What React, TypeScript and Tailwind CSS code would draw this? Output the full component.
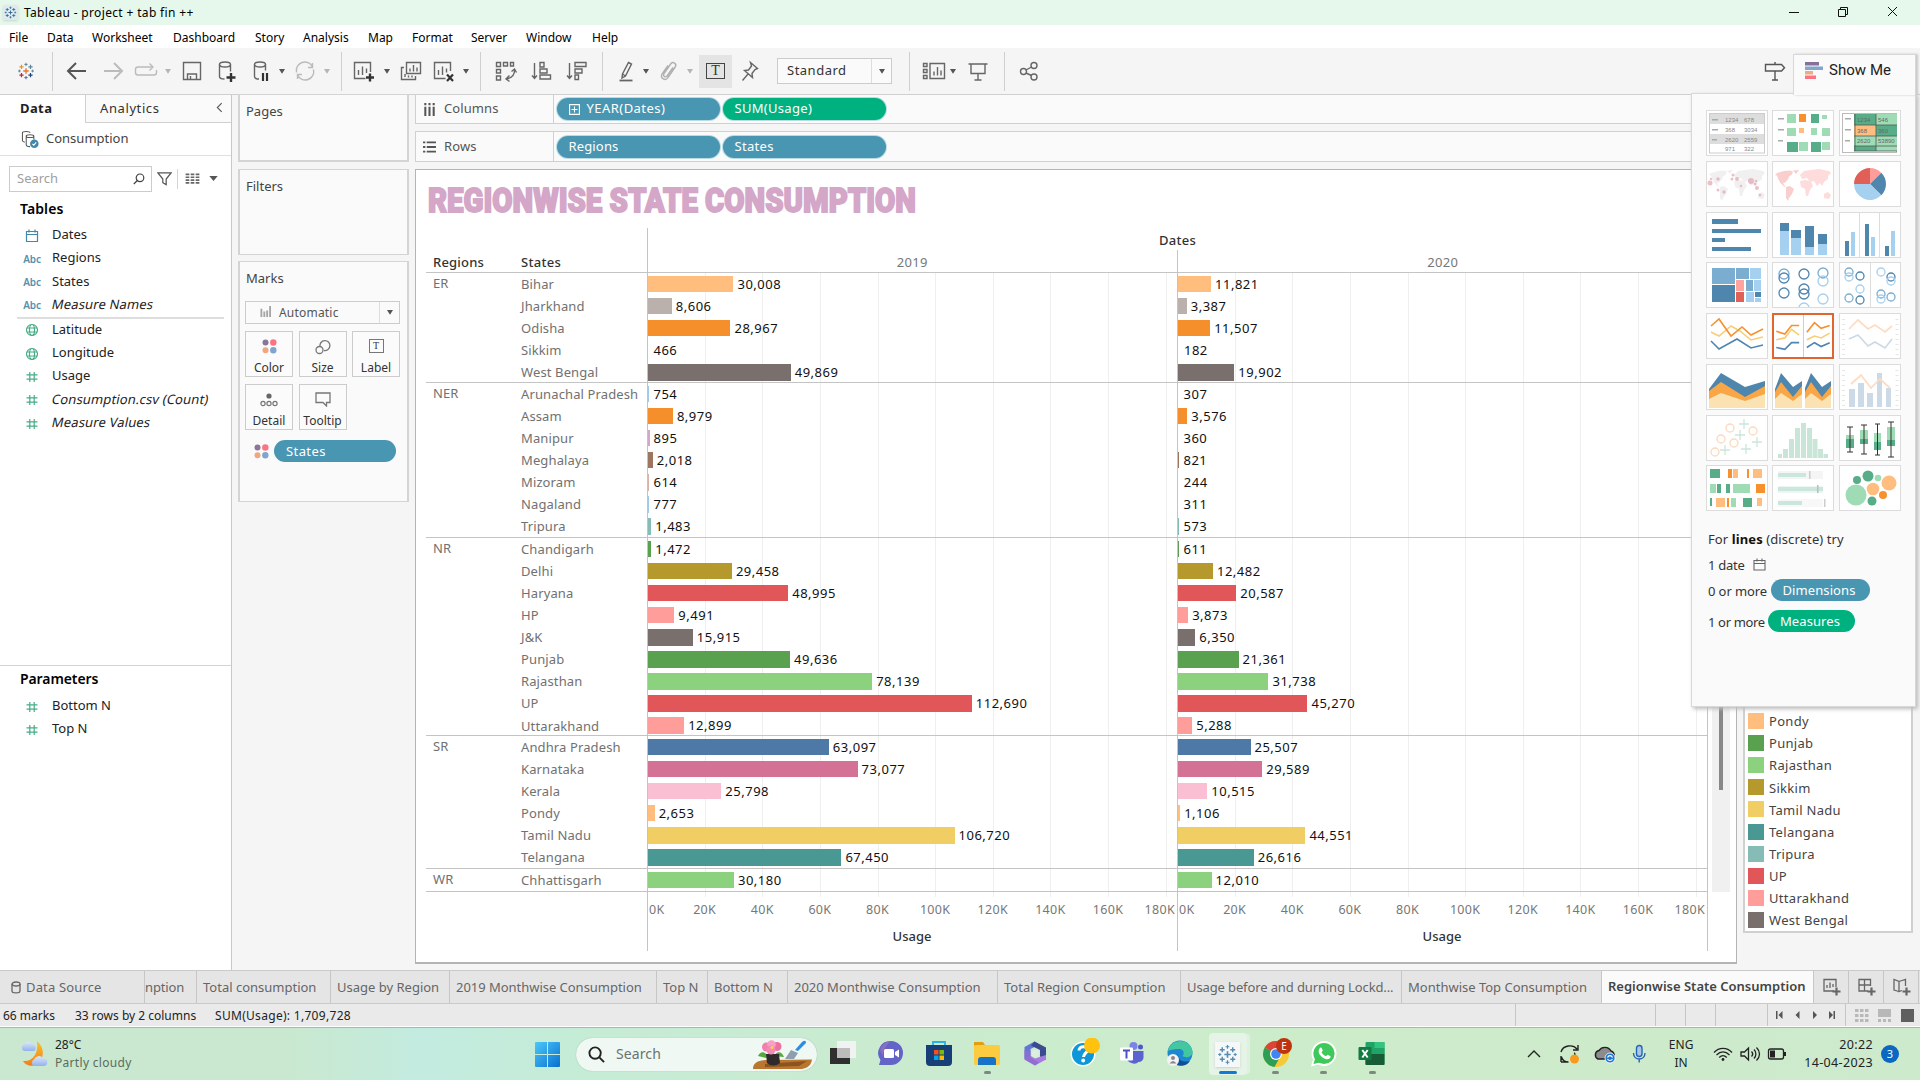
import React from "react";

type Row = [name: string, color: string, y2019: number, y2020: number];

const groups: { region: string; rows: Row[]; h: string }[] = [
  {
    region: "ER",
    h: "h-[110px]",
    rows: [
      ["Bihar", "#ffbe7d", 30008, 11821],
      ["Jharkhand", "#bab0ac", 8606, 3387],
      ["Odisha", "#f58f2c", 28967, 11507],
      ["Sikkim", "#b6992d", 466, 182],
      ["West Bengal", "#79706e", 49869, 19902],
    ],
  },
  {
    region: "NER",
    h: "h-[155px]",
    rows: [
      ["Arunachal Pradesh", "#a0cbe8", 754, 307],
      ["Assam", "#f58f2c", 8979, 3576],
      ["Manipur", "#d4a6c8", 895, 360],
      ["Meghalaya", "#9d7660", 2018, 821],
      ["Mizoram", "#d7b5a6", 614, 244],
      ["Nagaland", "#a0cbe8", 777, 311],
      ["Tripura", "#86bcb6", 1483, 573],
    ],
  },
  {
    region: "NR",
    h: "h-[198px]",
    rows: [
      ["Chandigarh", "#59a14f", 1472, 611],
      ["Delhi", "#b6992d", 29458, 12482],
      ["Haryana", "#e15759", 48995, 20587],
      ["HP", "#ff9d9a", 9491, 3873],
      ["J&K", "#79706e", 15915, 6350],
      ["Punjab", "#59a14f", 49636, 21361],
      ["Rajasthan", "#8cd17d", 78139, 31738],
      ["UP", "#e15759", 112690, 45270],
      ["Uttarakhand", "#ff9d9a", 12899, 5288],
    ],
  },
  {
    region: "SR",
    h: "h-[133px]",
    rows: [
      ["Andhra Pradesh", "#4e79a7", 63097, 25507],
      ["Karnataka", "#d37295", 73077, 29589],
      ["Kerala", "#fabfd2", 25798, 10515],
      ["Pondy", "#ffbe7d", 2653, 1106],
      ["Tamil Nadu", "#f1ce63", 106720, 44551],
      ["Telangana", "#499894", 67450, 26616],
    ],
  },
  {
    region: "WR",
    h: "h-[23px]",
    rows: [["Chhattisgarh", "#8cd17d", 30180, 12010]],
  },
];

const PX_PER_UNIT = 0.002882;
const fmt = (n: number) => n.toLocaleString("en-US");

function Caret({ className = "", light = false }: { className?: string; light?: boolean }) {
  return (
    <svg viewBox="0 0 8 5" className={`h-[5px] w-[8px] shrink-0 ${className}`}>
      <path d="M1 0h6L4 4.8z" fill={light ? "#b5b5b5" : "#555"} />
    </svg>
  );
}

function Ico({ className = "", color = "#666", children }: { className?: string; color?: string; children: React.ReactNode }) {
  return (
    <svg viewBox="0 0 24 24" className={`h-6 w-6 shrink-0 ${className}`} fill="none" stroke={color} strokeWidth="1.4">
      {children}
    </svg>
  );
}

function Divider({ className = "" }: { className?: string }) {
  return <div className={`h-[39px] w-px shrink-0 bg-[#cfcfcf] ${className}`} />;
}

function TableauMark({ className = "", mono = false }: { className?: string; mono?: boolean }) {
  const c = mono
    ? ["#2f6f9e", "#2f6f9e", "#2f6f9e", "#2f6f9e", "#2f6f9e", "#2f6f9e", "#2f6f9e"]
    : ["#e8762d", "#5b879b", "#c72037", "#5c6692", "#eb912c", "#59879b", "#1f447e"];
  const plus = (x: number, y: number, r: number, col: string, k: number, w = 1.6) => (
    <path key={k} d={`M${x - r} ${y}h${2 * r}M${x} ${y - r}v${2 * r}`} stroke={col} strokeWidth={w} />
  );
  return (
    <svg viewBox="0 0 24 24" className={className} fill="none">
      {plus(12, 12, 3.6, c[0], 0, 1.8)}
      {plus(12, 3.2, 2.2, c[5], 1, 1.3)}
      {plus(12, 20.8, 2.2, c[3], 2, 1.3)}
      {plus(3.2, 12, 1.8, c[1], 3, 1.3)}
      {plus(20.8, 12, 1.8, c[5], 4, 1.3)}
      {plus(6, 6.5, 2.8, c[4], 5)}
      {plus(18, 6.5, 2.8, c[1], 6)}
      {plus(6, 17.5, 2.8, c[2], 7)}
      {plus(18, 17.5, 2.8, c[6], 8)}
    </svg>
  );
}

const menu: [string, string][] = [
  ["File", "w-[38px]"],
  ["Data", "w-[45px]"],
  ["Worksheet", "w-[81px]"],
  ["Dashboard", "w-[82px]"],
  ["Story", "w-[48px]"],
  ["Analysis", "w-[65px]"],
  ["Map", "w-[44px]"],
  ["Format", "w-[59px]"],
  ["Server", "w-[55px]"],
  ["Window", "w-[66px]"],
  ["Help", "w-[40px]"],
];

function TitleBar() {
  return (
    <div className="flex h-[25px] items-center bg-[#e6f8ec] text-[12px] text-black">
      <div className="ml-[3px] flex h-[15px] w-[15px] items-center justify-center bg-[#dfe9ee] shadow-sm">
        <TableauMark mono className="h-[13px] w-[13px]" />
      </div>
      <span className="ml-[6px] tracking-[0.34px]">Tableau - project + tab fin ++</span>
      <svg viewBox="0 0 120 24" className="ml-auto mr-[16px] h-6 w-[120px]" fill="none" stroke="#111" strokeWidth="1">
        <path d="M5 11.500h10" />
        <path d="M54.500 8.500h7v7h-7zM56.500 8.500v-2h7v7h-2" />
        <path d="M104 6l9 9M113 6l-9 9" />
      </svg>
    </div>
  );
}

function Toolbar() {
  return (
    <div className="flex h-[46px] items-center bg-[#f5f5f5]">
      <TableauMark className="ml-[17px] h-[18px] w-[18px] shrink-0" />
      <Divider className="ml-[17px]" />
      <Ico className="ml-[12px]" color="#555">
        <path d="M21 12H3.500M11 4l-8 8 8 8" strokeWidth="2" />
      </Ico>
      <Ico className="ml-[12px]" color="#bbb">
        <path d="M3 12h17.500M13 4l8 8-8 8" strokeWidth="2" />
      </Ico>
      <Ico className="ml-[9px]" color="#bbb">
        <path d="M17.500 8H4a2.500 2.500 0 0 0-2.500 2.500v3A2.500 2.500 0 0 0 4 16h16a2.500 2.500 0 0 0 2.500-2.500V11M15.500 4.500l3.500 3.500-3.500 3.500" />
      </Ico>
      <Caret light className="ml-[6px]" />
      <Ico className="ml-[8px]">
        <path d="M3.500 3.500h17v17h-17zM7.500 20.500v-5.500h9v5.500M10.500 20v-3" />
      </Ico>
      <Ico className="ml-[11px]">
        <path d="M4.500 5.500v12c0 1.500 2 2.500 5 2.500M15.500 5.500v7" />
        <ellipse cx="10" cy="5.500" rx="5.500" ry="2.500" />
        <path d="M16 14v9M11.500 18.500h9" stroke="#333" strokeWidth="2.400" />
      </Ico>
      <Ico className="ml-[11px]">
        <path d="M4.500 5.500v12c0 1.500 2 2.500 4.500 2.500M15.500 5.500v6" />
        <ellipse cx="10" cy="5.500" rx="5.500" ry="2.500" />
        <path d="M13 14v8M17 14v8" stroke="#333" strokeWidth="2.200" />
      </Ico>
      <Caret className="ml-[4px]" />
      <Ico className="ml-[7px]" color="#bbb">
        <path d="M3.500 13.500a8.500 8.500 0 0 1 16-5.500M20.500 10.500a8.500 8.500 0 0 1-16 5.500M15 8.500h4.500V4M9 15.500H4.500V20" />
      </Ico>
      <Caret light className="ml-[6px]" />
      <Divider className="ml-[10px]" />
      <Ico className="ml-[10px]">
        <path d="M13.500 19.500H2.500v-16h16V13M6.500 16v-5M10.500 16V7.500M14.500 14V9.500" />
        <path d="M18 14.500v8M14 18.500h8" stroke="#333" strokeWidth="2.400" />
      </Ico>
      <Caret className="ml-[7px]" />
      <Ico className="ml-[8px]">
        <path d="M7.500 3.500h14v11h-14zM11 12.500V9.500M14.500 12.500V6M18 12.500V8.500M5 8.500H2.500v12h14V17M6 18v-3M9.500 18.500v-2M13 18.500v-2" />
      </Ico>
      <Ico className="ml-[10px]">
        <path d="M12.500 19.500H1.500v-16h16V12M5.500 16v-5M9.500 16V7.500M13.500 13.500V9.500" />
        <path d="M14 15.500l6 6.500M20 15.500l-6 6.500" stroke="#333" strokeWidth="2.200" />
      </Ico>
      <Caret className="ml-[5px]" />
      <Divider className="ml-[10px]" />
      <Ico className="ml-[13px]">
        <path d="M2.500 3.500h4v4h-4zM9.500 3.500h4v3.500h-4zM16.500 3.500h3v3.500h-3zM2.500 10.500h4v3.500h-4zM2.500 17h4v4h-4z" />
        <path d="M20.500 10c.5 6-3 9-8 10M17.500 12.500l3-2.500 2 3.500M15.500 16.500l-3.500 3.500 3.500 2.500" />
      </Ico>
      <Ico className="ml-[12px]">
        <path d="M4.500 4v15M2 16.500l2.500 3 2.500-3M10 3.500h4v4.500h-4zM10 10h7v4h-7zM10 16h10.500v4H10z" />
      </Ico>
      <Ico className="ml-[11px]">
        <path d="M4.500 4v15M2 16.500l2.500 3 2.500-3M10 3.500h11v4H10zM10 10h7v4h-7zM10 16h3.500v4.500H10z" />
      </Ico>
      <Divider className="ml-[13px]" />
      <Ico className="ml-[12px]">
        <path d="M13.500 3.500l3 1.500-6 12-3.500 2 .5-4zM7.500 15l3 2" />
        <path d="M4.500 21.500h13" strokeWidth="1.800" />
      </Ico>
      <Caret className="ml-[3px]" />
      <Ico className="ml-[7px]" color="#b0b0b0">
        <path d="M16 8.500l-6 8.500c-1.500 2-4.500 0-3-2.500l7-10c2-2.500 6 .5 4.500 3L11 18.500c-2.500 4-8 1-6-3.500l6-8.500" />
      </Ico>
      <Caret light className="ml-[5px]" />
      <div className="ml-[5px] flex h-[33px] w-[33px] shrink-0 items-center justify-center bg-[#e4e4e4]">
        <div className="flex h-[16px] w-[19px] items-center justify-center border-[1.5px] border-[#444] font-['Liberation_Serif'] text-[14px] leading-none text-[#333]">
          T
        </div>
      </div>
      <Ico className="ml-[6px]">
        <path d="M12.500 3.500l7 6-2.500 1-3 4 .5 4-8-7 4-.5 3-4zM10 15l-5.500 6.500" />
      </Ico>
      <div className="ml-[15px] flex h-[26px] w-[115px] shrink-0 items-center border border-[#ccc] bg-[#fafafa] text-[13px] text-[#333]">
        <span className="flex-1 pl-[9px] tracking-[0.5px]">Standard</span>
        <span className="flex h-full w-[20px] items-center justify-center border-l border-[#ddd]">
          <Caret />
        </span>
      </div>
      <Divider className="ml-[17px]" />
      <Ico className="ml-[12px]">
        <path d="M1.500 4.500h3.500v3h-3.500zM1.500 10.500h3.500v3h-3.500zM1.500 16.500h3.500v3h-3.500zM8 4.500h14.500v15H8zM12 16.500v-4M15.500 16.500V8M19 16.500v-5" />
      </Ico>
      <Caret className="ml-[3px]" />
      <Ico className="ml-[9px]">
        <path d="M2.500 5h19M5 5v9.500h14V5M12 14.500v6M8.500 21h7" />
      </Ico>
      <Divider className="ml-[14px]" />
      <Ico className="ml-[12px]">
        <circle cx="6.500" cy="12.500" r="3" />
        <circle cx="17" cy="6.500" r="3" />
        <circle cx="17" cy="18" r="3" />
        <path d="M9 11l5.500-3M9 14l5.500 2.500" />
      </Ico>
      <Ico className="ml-[722px]" color="#555">
        <path d="M2.500 5.500h16l3 3.200-3 3.300h-16zM12 3v2.500M12 12v9M9 21h6" />
      </Ico>
    </div>
  );
}

const blue = "#3f88ab";
const green = "#45ad85";

function FieldIcon({ kind }: { kind: string }) {
  if (kind === "abc") return <span className="pt-[2px] text-[10px] font-semibold tracking-[-0.2px] text-[#5491ae]">Abc</span>;
  return (
    <svg viewBox="0 0 14 14" className="mt-[2px] h-[14px] w-[14px]" fill="none" stroke={kind === "date" ? blue : green} strokeWidth="1.200">
      {kind === "date" && <path d="M1.500 2.500h11v10h-11zM1.500 5.500h11M4 .5v3M10 .5v3" />}
      {kind === "geo" && (
        <>
          <circle cx="7" cy="7" r="5.500" />
          <ellipse cx="7" cy="7" rx="2.500" ry="5.500" />
          <path d="M2 5h10M2 9h10" />
        </>
      )}
      {kind === "num" && <path d="M4.800 2v10M9.200 2v10M1.500 4.800h11M1.500 9.200h11" />}
    </svg>
  );
}

function Field({ kind, label, italic = false }: { kind: string; label: string; italic?: boolean }) {
  return (
    <div className="flex h-[23.4px] items-center text-[13px] text-[#222]">
      <span className="flex w-[26px] justify-center">
        <FieldIcon kind={kind} />
      </span>
      <span className={`ml-[7px] whitespace-nowrap ${italic ? "-skew-x-12 tracking-[0.15px]" : ""}`}>{label}</span>
    </div>
  );
}

function DataPane() {
  return (
    <div className="flex w-[232px] shrink-0 flex-col border-r border-[#c8c8c8] bg-white">
      <div className="flex h-[28px] text-[#222]">
        <div className="w-[85px] pl-[20px] text-[13px] font-bold leading-[26px] tracking-[0.4px]">Data</div>
        <div className="flex flex-1 items-center border-b border-l border-[#d0d0d0] bg-[#fafafa] pl-[14px] text-[13px] text-[#333]">
          <span className="tracking-[0.6px]">Analytics</span>
          <svg viewBox="0 0 8 12" className="mb-[2px] ml-auto mr-[8px] h-[11px] w-[7px]" fill="none" stroke="#555" strokeWidth="1.300">
            <path d="M6.500 1L1.500 6l5 5" />
          </svg>
        </div>
      </div>
      <div className="flex h-[33px] items-center border-b border-[#e0e0e0] pl-[21px] text-[13px] text-[#444]">
        <svg viewBox="0 0 20 20" className="h-[19px] w-[19px]" fill="none" stroke="#555" strokeWidth="1.100">
          <path d="M1.500 3v8c0 1 1 1.500 2.500 2M1.500 3c0-2 8-2 8 0M5.500 6.500v9c0 1.500 2 2 4 2M13.500 6v4M5.500 6.500c0-2 8-2 8 0s-8 2-8 0" />
          <circle cx="14" cy="14.500" r="4.500" fill={blue} stroke="none" />
          <path d="M12 14.500l1.500 1.500 2.500-3" stroke="#fff" />
        </svg>
        <span className="ml-[6px]">Consumption</span>
      </div>
      <div className="mt-[9px] flex h-[27px] items-center pl-[9px]">
        <div className="flex h-[26px] w-[143px] items-center justify-between border border-[#ccc] pl-[7px] pr-[6px] text-[13px] text-[#a0a0a0]">
          Search
          <svg viewBox="0 0 12 12" className="h-[12px] w-[12px]" fill="none" stroke="#444" strokeWidth="1.200">
            <circle cx="7" cy="4.800" r="3.800" />
            <path d="M4.300 7.500L.8 11" />
          </svg>
        </div>
        <svg viewBox="0 0 16 16" className="ml-[5px] h-[16px] w-[15px]" fill="none" stroke="#555" strokeWidth="1.300">
          <path d="M1 1.500h14L9.800 8v6l-3.600-2V8z" />
        </svg>
        <div className="ml-[5px] h-[20px] w-px bg-[#d4d4d4]" />
        <svg viewBox="0 0 15 12" className="ml-[7px] h-[11px] w-[15px]" stroke="#666" strokeWidth="1.800">
          <path d="M0 1.500h15M0 4.600h15M0 7.700h15M0 10.800h15" strokeDasharray="4 1.500" />
        </svg>
        <svg viewBox="0 0 10 6" className="ml-[9px] h-[5px] w-[9px]">
          <path d="M0 0h10L5 6z" fill="#555" />
        </svg>
      </div>
      <div className="mt-[6px] pl-[20px] text-[14px] font-semibold leading-[22px] tracking-[0.1px] text-black">Tables</div>
      <div className="mt-[3px] pl-[19px]">
        <Field kind="date" label="Dates" />
        <Field kind="abc" label="Regions" />
        <Field kind="abc" label="States" />
        <Field kind="abc" label="Measure Names" italic />
      </div>
      <div className="ml-[17px] h-[2px] w-[207px] bg-[#dedede]" />
      <div className="-mt-px pl-[19px]">
        <Field kind="geo" label="Latitude" />
        <Field kind="geo" label="Longitude" />
        <Field kind="num" label="Usage" />
        <Field kind="num" label="Consumption.csv (Count)" italic />
        <Field kind="num" label="Measure Values" italic />
      </div>
      <div className="mt-auto h-[305px] border-t border-[#d4d4d4] pt-[1px]">
        <div className="pl-[20px] text-[14px] font-semibold leading-[23px] tracking-[-0.1px] text-black">Parameters</div>
        <div className="mt-[4px] pl-[19px]">
          <Field kind="num" label="Bottom N" />
          <Field kind="num" label="Top N" />
        </div>
      </div>
    </div>
  );
}

function Dots() {
  return (
    <svg viewBox="0 0 15 15" className="h-[15px] w-[15px]">
      <circle cx="3.500" cy="3.500" r="3" fill="#8b7599" />
      <circle cx="11.300" cy="3.500" r="3.200" fill="#fc7483" />
      <circle cx="3.500" cy="11.300" r="3" fill="#f2a67c" />
      <circle cx="11.300" cy="11.300" r="3.200" fill="#80a5cd" />
    </svg>
  );
}

function MarkButton({ label, children }: { label: string; children: React.ReactNode }) {
  return (
    <div className="flex h-[46px] w-[48px] flex-col items-center justify-between border border-[#ccc] bg-[#fbfbfb] pt-[7px] text-[12px] leading-[17px] text-[#333]">
      {children}
      <span>{label}</span>
    </div>
  );
}

function Cards() {
  return (
    <div className="w-[183px] shrink-0 pl-[6px] pr-[6px] text-[13px] text-[#444]">
      <div className="-mt-px h-[68px] border-2 border-t-[1px] border-[#d4d4d4] bg-[#fafafa] pl-[6px] pt-[6px] leading-[20px]">Pages</div>
      <div className="mt-[7px] h-[86px] border-2 border-y-[1px] border-[#d4d4d4] bg-[#fafafa] pl-[6px] pt-[6px] leading-[20px]">Filters</div>
      <div className="mt-[6px] h-[241px] border-2 border-y-[1px] border-[#d4d4d4] bg-[#fafafa] pl-[5px] pr-[6px] pt-[6px]">
        <div className="pl-px leading-[20px]">Marks</div>
        <div className="mt-[13px] flex h-[23px] w-[155px] items-center border border-[#ccc] pl-[14px] text-[12px] text-[#555]">
          <svg viewBox="0 0 12 12" className="mb-[2px] h-[11px] w-[11px]" stroke="#a5a5a5" strokeWidth="2">
            <path d="M1.500 12V3M4.700 12V6M7.800 12V5M11 12V0" />
          </svg>
          <span className="ml-[8px] tracking-[0.2px]">Automatic</span>
          <span className="ml-auto flex h-full w-[20px] items-center justify-center border-l border-[#ddd]">
            <Caret />
          </span>
        </div>
        <div className="mt-[7px] flex w-[155px] flex-wrap gap-x-[5.5px] gap-y-[7px]">
          <MarkButton label="Color">
            <Dots />
          </MarkButton>
          <MarkButton label="Size">
            <svg viewBox="0 0 16 16" className="h-[16px] w-[16px]" fill="none" stroke="#777" strokeWidth="1.300">
              <path d="M5 7.500A5 5 0 1 1 9 11.500" />
              <circle cx="4.500" cy="11" r="3.500" />
            </svg>
          </MarkButton>
          <MarkButton label="Label">
            <div className="flex h-[14px] w-[15px] items-center justify-center border-[1.5px] border-[#777] font-['Liberation_Serif'] text-[10px] leading-none">T</div>
          </MarkButton>
          <MarkButton label="Detail">
            <svg viewBox="0 0 18 14" className="mt-[1px] h-[14px] w-[18px]" fill="none" stroke="#777" strokeWidth="1.200">
              <circle cx="9" cy="3" r="2.600" fill="#666" stroke="none" />
              <circle cx="3" cy="10.500" r="2.100" />
              <circle cx="9" cy="10.500" r="2.100" />
              <circle cx="15" cy="10.500" r="2.100" />
            </svg>
          </MarkButton>
          <MarkButton label="Tooltip">
            <svg viewBox="0 0 16 15" className="h-[15px] w-[16px]" fill="none" stroke="#777" strokeWidth="1.300">
              <path d="M1 1h14v9.500h-3.500V14L8 10.500H1z" />
            </svg>
          </MarkButton>
        </div>
        <div className="mt-[10px] flex items-center pl-[9px]">
          <Dots />
          <div className="ml-[5px] h-[22px] w-[122px] rounded-full bg-[#4996b2] pl-[12px] leading-[22px] tracking-[0.4px] text-white">States</div>
        </div>
      </div>
    </div>
  );
}

function Pill({ color, children }: { color: string; children: React.ReactNode }) {
  return (
    <div className={`flex h-[22px] w-[163px] items-center rounded-full pl-[12px] text-[13px] text-white ring-1 ring-[#b9dbe3] ${color}`}>
      {children}
    </div>
  );
}

function Shelf({ label, icon, children, className }: { label: string; icon: React.ReactNode; children: React.ReactNode; className: string }) {
  return (
    <div className={`flex border border-r-0 border-[#d0d0d0] bg-[#fafafa] ${className}`}>
      <div className="flex w-[138px] shrink-0 items-center border-r border-[#d0d0d0] pl-[7px] text-[13px] text-[#555]">
        {icon}
        <span className="ml-[8px] tracking-[0.1px]">{label}</span>
      </div>
      <div className="flex items-center gap-[3px] pl-[2.5px]">{children}</div>
    </div>
  );
}

function Bars({ rows, year }: { rows: Row[]; year: 2 | 3 }) {
  return (
    <div className="w-[530px]">
      {rows.map((r) => {
        const v = r[year];
        const w = v * PX_PER_UNIT;
        return (
          <div key={r[0]} className="flex h-[22.07px] items-center">
            <div className="h-[16.5px] shrink-0" style={{ width: Math.max(w, 1), backgroundColor: r[1], opacity: w < 1.2 ? 0.35 : 1 }} />
            <span className="pt-px text-[13px] tracking-[0.5px] text-[#111]" style={{ marginLeft: Math.max(4, 6.5 - w) }}>
              {fmt(v)}
            </span>
          </div>
        );
      })}
    </div>
  );
}

function Axis() {
  const mid = ["20K", "40K", "60K", "80K", "100K", "120K", "140K", "160K"];
  return (
    <div className="w-[530px]">
      <div className="flex pt-[8px] text-[12.5px] leading-[20px] tracking-[0.3px] text-[#777]">
        <span className="w-[28.8px] pl-[2px]">0K</span>
        {mid.map((m) => (
          <span key={m} className="w-[57.64px] text-center">
            {m}
          </span>
        ))}
        <span className="flex-1 pr-[2px] text-right">180K</span>
      </div>
      <div className="pt-[6px] text-center text-[13px] font-medium leading-[20px] text-[#333]">Usage</div>
    </div>
  );
}

function GridLines({ className }: { className: string }) {
  return (
    <div className={`absolute top-0 h-[624px] w-[530px] ${className}`}>
      {[20, 40, 60, 80, 100, 120, 140, 160, 180].map((k) => (
        <div key={k} className="absolute h-full w-px bg-[#efefef]" style={{ left: Math.round(k * 1000 * PX_PER_UNIT) }} />
      ))}
    </div>
  );
}

function Worksheet() {
  return (
    <div className="mt-[7px] flex h-[795px] w-[1322px] border-b-2 border-l border-r border-t border-[#b4b4b4] bg-white pl-[10px]">
      <div className="w-[1282px] shrink-0">
        <div className="h-[58px] pl-[2px] pt-[9px]">
          <h1 className="origin-left scale-x-[0.862] whitespace-nowrap font-['Roboto'] text-[34px] font-black leading-[43px] text-[#d4a6c8] [-webkit-text-stroke:1.8px_#d4a6c8]">
            REGIONWISE STATE CONSUMPTION
          </h1>
        </div>
        <div className="flex h-[45px] border-b border-[#c4c4c4] text-[13px] tracking-[0.3px]">
          <div className="flex w-[221px] items-end font-medium leading-[20px] text-[#333]">
            <span className="w-[88px] pl-[7px] tracking-[0.2px]">Regions</span>
            <span className="pl-[7px]">States</span>
          </div>
          <div className="flex-1">
            <div className="pt-[2px] text-center font-medium leading-[20px] text-[#333]">Dates</div>
            <div className="flex text-[#777]">
              <span className="w-1/2 pt-[2px] text-center leading-[20px]">2019</span>
              <span className="w-1/2 pt-[2px] text-center leading-[20px]">2020</span>
            </div>
          </div>
        </div>
        <div className="relative">
          <GridLines className="left-[221px]" />
          <GridLines className="left-[751px]" />
          {groups.map((g) => (
            <div key={g.region} className={`relative flex border-b border-[#c4c4c4] text-[13px] tracking-[0.12px] text-[#717171] ${g.h}`}>
              <div className="w-[95px] pl-[7px] leading-[20px]">{g.region}</div>
              <div className="w-[126px]">
                {g.rows.map((r) => (
                  <div key={r[0]} className="h-[22.07px] whitespace-nowrap leading-[23px]">
                    {r[0]}
                  </div>
                ))}
              </div>
              <Bars rows={g.rows} year={2} />
              <Bars rows={g.rows} year={3} />
            </div>
          ))}
        </div>
        <div className="flex pl-[221px]">
          <Axis />
          <Axis />
        </div>
      </div>
      <div className="ml-[4px] mt-[100px] h-[622px] w-[18px] bg-[#f0f0f0]">
        <div className="mx-auto h-[520px] w-[4px] bg-[#888]" />
      </div>
    </div>
  );
}

const legend: [string, string][] = [
  ["Pondy", "bg-[#ffbe7d]"],
  ["Punjab", "bg-[#59a14f]"],
  ["Rajasthan", "bg-[#8cd17d]"],
  ["Sikkim", "bg-[#b6992d]"],
  ["Tamil Nadu", "bg-[#f1ce63]"],
  ["Telangana", "bg-[#499894]"],
  ["Tripura", "bg-[#86bcb6]"],
  ["UP", "bg-[#e15759]"],
  ["Uttarakhand", "bg-[#ff9d9a]"],
  ["West Bengal", "bg-[#79706e]"],
];

function Thumb({ selected = false, children }: { selected?: boolean; children: React.ReactNode }) {
  return (
    <div className={`h-[46px] w-[62px] bg-white ${selected ? "border-2 border-[#e0662f]" : "border border-[#dcdcdc]"}`}>
      <svg viewBox="1 1 60 44" className="h-full w-full" fill="none">
        {children}
      </svg>
    </div>
  );
}

const D = "#4f86ae";
const L = "#a5d0ef";
const M = "#7badd1";
const G = "#57ad87";
const LG = "#9fdcb5";
const O = "#f6912d";
const LO = "#ffbe80";

function rects(list: [number, number, number, number, string][]) {
  return list.map(([x, y, w, h, f], i) => <rect key={i} x={x} y={y} width={w} height={h} fill={f} />);
}

function WorldMap({ a, b }: { a: string; b: string }) {
  return (
    <>
      <path d="M3 14l2-2 7-2 6-.5 3 1-1 3-3 2-1 3-3 3-2 1 3 4-2-1-4-4-2-4-1-3zM14 26l4-1 4 3-2 5-3 4-1 3-2-3 0-5zM21 9.500l6-.5-3 4z" fill={a} />
      <path d="M28 14l4-4 7-1 8-1 10 2 2 2-3 3 0 3-4 3-2 4-2-3-3 3-3-5-4 1-3-4-5 1zM28 20l6-1 5 2 2 4-3 4-2 6-2 0-1-7-4-2zM52 33l4-2 3 3-2 4-5-1z" fill={b} />
    </>
  );
}

function ShowMe() {
  const t = "font-['Liberation_Sans']";
  return (
    <>
      <div className="absolute left-[1793px] top-[54px] z-20 flex h-[41px] w-[123px] items-center border border-b-0 border-[#d8d8d8] bg-[#fafafa] pb-[9px] pl-[11px] shadow-[2px_0_2px_#c8c8c8]">
        <svg viewBox="0 0 18 17" className="h-[17px] w-[18px]">
          {rects([
            [0, 0, 14, 3.5, "#87709a"],
            [0, 4.5, 18, 3.5, "#83a6cf"],
            [0, 9, 8, 3.5, "#f2a880"],
            [0, 13.5, 11, 3.5, "#fc7483"],
          ])}
        </svg>
        <span className="ml-[6px] font-['Roboto'] text-[15px] tracking-[0.05px] text-[#222]">Show Me</span>
      </div>
      <div className="absolute left-[1691px] top-[93px] z-10 h-[614px] w-[225px] border border-[#d8d8d8] bg-[#fafafa] pl-[14px] pt-[16px] shadow-[2px_2px_4px_#bbb]">
        <div className="grid w-[200px] grid-cols-[62px_62px_62px] gap-x-[4.4px] gap-y-[4.75px]">
          <Thumb>
            {rects([[3, 3, 56, 40, "#fff"], [4, 4, 54, 10, "#ddd"], [4, 24, 54, 10, "#ddd"], [6, 9, 6, 1.5, "#aaa"], [6, 19, 6, 1.5, "#aaa"], [6, 29, 5, 1.5, "#aaa"]])}
            <rect x="3.500" y="3.500" width="55" height="39.500" stroke="#ccc" />
            <g fill="#888" fontSize="6" className={t}>
              <text x="19" y="12">1234</text><text x="38" y="12">678</text>
              <text x="19" y="22">368</text><text x="38" y="22">3034</text>
              <text x="19" y="32">2620</text><text x="38" y="32">2559</text>
              <text x="19" y="41">971</text><text x="38" y="41">322</text>
            </g>
          </Thumb>
          <Thumb>
            {rects([
              [6, 8, 6, 1.5, "#aaa"], [6, 19, 6, 1.5, "#aaa"], [6, 30, 5, 1.5, "#aaa"],
              [15, 4, 9, 9, LG], [27, 4, 7, 8, O], [39, 4, 8, 9, G], [50, 5, 5, 4, LG],
              [15, 18, 9, 8, LG], [27, 18, 5, 5, LO], [39, 18, 6, 7, LG], [50, 18, 8, 8, LG],
              [15, 32, 11, 10, G], [27, 32, 9, 9, LG], [39, 32, 10, 10, G], [50, 32, 8, 8, LG],
            ])}
          </Thumb>
          <Thumb>
            <rect x="3.500" y="3.500" width="54" height="39" stroke="#bbb" />
            {rects([
              [6, 8, 6, 1.5, "#aaa"], [6, 19, 6, 1.5, "#aaa"], [6, 30, 5, 1.5, "#aaa"],
              [15, 4, 22, 11, G], [37, 4, 21, 11, LG], [15, 15, 22, 11, LO], [37, 15, 21, 11, G],
              [15, 26, 22, 10, LG], [37, 26, 21, 10, LG], [15, 36, 22, 5, G], [37, 36, 21, 5, LG],
            ])}
            <path d="M16 4v37M37 4v37M15 15h43M15 26h43M15 36h43M15 41h43" stroke="#555" strokeWidth=".8" />
            <g fill="#666" fontSize="6" className={t}>
              <text x="18" y="12">1234</text><text x="39" y="12">546</text>
              <text x="18" y="23">368</text><text x="39" y="23">360</text>
              <text x="18" y="33">2620</text><text x="39" y="33">53890</text>
            </g>
          </Thumb>
          <Thumb>
            <WorldMap a="#f0f0f0" b="#f0f0f0" />
            <g fill="#e5aab4" opacity=".75">
              {[[4, 22, 2.5], [5, 18, 1.2], [12, 18, 1.8], [26, 18, 1.5], [27, 14, 1.5], [31, 18, 2], [35, 25, 1.2], [45, 20, 3], [49, 23, 1.5], [51, 27, 2], [54, 34, 1.3], [12, 29, 1.5], [18, 31, 1.7], [50, 20, 1.2]].map(([x, y, r], i) => (
                <circle key={i} cx={x} cy={y} r={r} />
              ))}
            </g>
          </Thumb>
          <Thumb>
            <WorldMap a="#f8cfcd" b="#fddcdb" />
          </Thumb>
          <Thumb>
            <path d="M31 23V7a16 16 0 0 1 11.300 4.700z" fill="#ff9d9a" />
            <path d="M31 23l11.300-11.300a16 16 0 0 1 0 22.600z" fill={D} />
            <path d="M31 23l11.300 11.300A16 16 0 0 1 15 23z" fill={L} />
            <path d="M31 23H15A16 16 0 0 1 31 7z" fill="#e06057" />
          </Thumb>
          <Thumb>{rects([[6, 7, 26, 5, D], [6, 17, 49, 4, D], [6, 26, 13, 4, D], [6, 35, 39, 4, D]])}</Thumb>
          <Thumb>
            {rects([
              [8, 19, 9, 24, L], [8, 11, 9, 8, D], [19, 26, 10, 17, L], [19, 18, 10, 8, D],
              [33, 35, 9, 8, L], [33, 14, 9, 21, D], [46, 32, 9, 11, L], [46, 22, 9, 10, D],
            ])}
          </Thumb>
          <Thumb>
            {rects([
              [20, 1, 1, 44, "#ddd"], [40, 1, 1, 44, "#ddd"],
              [6, 29, 4, 15, D], [12, 20, 4, 24, L], [26, 12, 4, 32, D], [32, 25, 4, 19, L], [46, 34, 4, 10, D], [52, 19, 4, 25, L],
            ])}
          </Thumb>
          <Thumb>
            {rects([
              [6, 6, 23, 16, M], [6, 23, 23, 17, D], [30, 6, 13, 11, M], [44, 6, 11, 11, L],
              [30, 18, 8, 11, "#ffa39c"], [30, 30, 8, 10, "#e06057"], [40, 18, 7, 11, M], [48, 18, 7, 11, L],
              [40, 30, 8, 10, L], [49, 30, 6, 5, D], [49, 36, 6, 4, L],
            ])}
          </Thumb>
          <Thumb>
            <g strokeWidth="1.300">
              {[[12, 12, M], [12, 16, D], [12, 31, D], [32, 12, D], [32, 27, D], [32, 32, D], [32, 46, L], [51, 11, M], [51, 19, L], [51, 37, L]].map(([x, y, c], i) => (
                <circle key={i} cx={x} cy={y} r="5" stroke={c as string} />
              ))}
            </g>
          </Thumb>
          <Thumb>
            <path d="M31.500 1v44" stroke="#ddd" />
            <g strokeWidth="1.300">
              {[[10, 10, M], [10, 15, L], [21, 14, D], [21, 27, L], [10, 36, M], [21, 38, D], [42, 10, L], [52, 15, D], [52, 19, L], [42, 32, M], [42, 37, L], [52, 35, M]].map(([x, y, c], i) => (
                <circle key={i} cx={x} cy={y} r="4" stroke={c as string} />
              ))}
            </g>
          </Thumb>
          <Thumb>
            <g strokeWidth="1.600">
              <path d="M5 19l8 4 12-10 9 5 11 9 12-3" stroke="#f8ce75" />
              <path d="M5 13l8-7 12 17 11-9 9 8 12-6" stroke={O} />
              <path d="M5 28l8 8 18-10 14 9 12-3" stroke={D} />
            </g>
          </Thumb>
          <Thumb selected>
            <path d="M31.500 0v46" stroke="#ccc" />
            <g strokeWidth="1.700">
              <path d="M3 27l9-2 7-9 8 6M35 27l8-4 7 2 9-5" stroke="#f8ce75" />
              <path d="M3 18l9 3 7-9h8M35 19l8-10 7 6 9-3" stroke={O} />
              <path d="M3 35l9 2 7-7h8M35 35l8-5 7 4 9-4" stroke={D} />
            </g>
          </Thumb>
          <Thumb>
            <path d="M10 16l9-9 10 9 7-4 10 7 7-6" stroke="#fcdcc3" strokeWidth="1.700" />
            <path d="M10 26l9-4 10 11 7-4 10 6 7-9" stroke="#ccd9e7" strokeWidth="1.700" />
            <path d="M4.500 6v38M58 6v38" stroke="#e6e6e6" strokeWidth="3" strokeDasharray="1 4" />
          </Thumb>
          <Thumb>
            <path d="M3 25L15 9l24 14 20-6v27H3z" fill={D} />
            <path d="M3 27l12-9 24 15 20-11v22H3z" fill="#f9a647" />
            <path d="M3 35l12-6 24 8 20-7v14H3z" fill="#fae2b3" />
          </Thumb>
          <Thumb>
            <path d="M3 25L9 9l12 14 9-6v27H3zM33 24l6-15 11 14 9-6v27H33z" fill={D} />
            <path d="M3 28l6-10 12 15 9-11v22H3zM33 28l6-10 11 15 9-11v22H33z" fill="#f9a647" />
            <path d="M3 35l6-6 12 8 9-7v14H3zM33 35l6-6 11 8 9-7v14H33z" fill="#fae2b3" />
          </Thumb>
          <Thumb>
            {rects([[10, 25, 6, 18, "#ccd9e7"], [19, 19, 6, 24, "#ccd9e7"], [28, 29, 6, 14, "#ccd9e7"], [38, 9, 5, 34, "#ccd9e7"], [47, 24, 5, 19, "#ccd9e7"]])}
            <path d="M12 20l10-9 10 13 9-9 10 9" stroke="#fcdcc3" strokeWidth="1.700" />
            <path d="M4.500 6v38M58 6v38" stroke="#e6e6e6" strokeWidth="3" strokeDasharray="1 4" />
          </Thumb>
          <Thumb>
            <g stroke="#fcd9bd" strokeWidth="1.300">
              {[[9, 37], [15, 24], [24, 13], [28, 28], [47, 16]].map(([x, y], i) => (
                <circle key={i} cx={x} cy={y} r="4" />
              ))}
            </g>
            <path d="M33 9h10M38 4v10M29 20h10M34 15v10M14 35h10M19 30v10M35 34h10M40 29v10M46 27h10M51 22v10" stroke="#cbe6da" strokeWidth="1.300" />
          </Thumb>
          <Thumb>
            {rects([[6, 39, 4, 4, "#c9e5d8"], [11, 34, 5, 9, "#c9e5d8"], [17, 24, 5, 19, "#c9e5d8"], [23, 13, 5, 30, "#c9e5d8"], [29, 8, 5, 35, "#c9e5d8"], [35, 13, 5, 30, "#c9e5d8"], [40.5, 24, 5, 19, "#c9e5d8"], [46, 34, 5, 9, "#c9e5d8"], [51.5, 39, 4.5, 4, "#c9e5d8"]])}
          </Thumb>
          <Thumb>
            {rects([[7, 20, 8, 5, LG], [7, 24, 8, 9, G], [21, 15, 8, 9, LG], [21, 24, 8, 5, G], [35, 18, 7, 10, LG], [35, 27, 7, 8, G], [48, 12, 8, 13, LG], [48, 25, 8, 6, G]])}
            <path d="M11 12v25M8 12h6M8 37h6M25 10v29M22 10h6M22 39h6M38.500 9v31M36 9h5M36 40h5M52 7v35M49 7h6M49 42h6" stroke="#333" />
          </Thumb>
          <Thumb>
            {rects([
              [4, 4, 10, 9, G], [22, 4, 4, 9, O], [27, 4, 5, 9, LO], [41, 4, 2, 9, O], [47, 4, 9, 9, LO],
              [4, 19, 6, 9, LG], [11, 19, 4, 9, G], [20, 19, 4, 9, G], [27, 19, 17, 9, LG], [50, 19, 9, 9, O],
              [4, 33, 2, 8, G], [10, 33, 9, 9, LO], [21, 33, 2, 9, O], [25, 33, 5, 9, LG], [37, 33, 9, 9, G], [51, 33, 5, 8, LO],
            ])}
          </Thumb>
          <Thumb>
            {rects([
              [6, 6, 45, 8, "#f5f5f5"], [6, 8, 28, 4, "#cbe6da"], [37, 6, 1.5, 8, "#ccc"],
              [6, 21, 45, 7, "#edf6f2"], [6, 22, 45, 4, "#cbe6da"], [45, 20, 1.5, 8, "#bbb"],
              [6, 34, 45, 8, "#f8f8f8"], [6, 36, 24, 4, "#cbe6da"], [52, 34, 1.5, 8, "#ccc"],
            ])}
          </Thumb>
          <Thumb>
            <circle cx="17" cy="30" r="10.500" fill={LG} />
            <circle cx="18" cy="15" r="4" fill={G} />
            <circle cx="29" cy="11" r="5.500" fill={G} />
            <circle cx="39" cy="13" r="3.300" fill={LG} />
            <circle cx="50" cy="18" r="7.500" fill={LO} />
            <circle cx="34" cy="24" r="6.300" fill={LO} />
            <circle cx="44" cy="30" r="4" fill={O} />
            <circle cx="33" cy="36" r="4.500" fill={G} />
          </Thumb>
        </div>
        <div className="mt-[18px] pl-[2px] text-[13px] text-[#333]">
          <div className="leading-[20px] tracking-[0.1px]">
            For <b className="font-bold text-[#111]">lines</b> (discrete) try
          </div>
          <div className="mt-[6px] flex h-[20px] items-center tracking-[-0.25px]">
            1 date
            <svg viewBox="0 0 13 13" className="mb-[2px] ml-[8px] h-[13px] w-[13px]" fill="none" stroke="#666" strokeWidth="1.100">
              <path d="M1 2.500h11v9.500H1zM1 5.500h11M4 .5v3M9 .5v3" />
            </svg>
          </div>
          <div className="mt-[4px] flex h-[22px] items-center whitespace-nowrap">
            <span className="w-[63px] pt-[2px] tracking-[-0.1px]">0 or more</span>
            <span className="h-[22px] w-[99px] rounded-full bg-[#4996b2] pr-[3px] text-center leading-[22px] tracking-[0.1px] text-white">Dimensions</span>
          </div>
          <div className="mt-[9px] flex h-[22px] items-center whitespace-nowrap">
            <span className="w-[60px] pt-[2px] tracking-[-0.35px]">1 or more</span>
            <span className="h-[22px] w-[87px] rounded-full bg-[#00b180] pr-[3px] text-center leading-[22px] tracking-[0.1px] text-white">Measures</span>
          </div>
        </div>
      </div>
    </>
  );
}

const sheets: [string, string][] = [
  ["Total consumption", "w-[134px]"],
  ["Usage by Region", "w-[119px]"],
  ["2019 Monthwise Consumption", "w-[207px] tracking-[-0.03px]"],
  ["Top N", "w-[51px]"],
  ["Bottom N", "w-[80px]"],
  ["2020 Monthwise Consumption", "w-[210px]"],
  ["Total Region Consumption", "w-[183px]"],
  ["Usage before and durning Lockd...", "w-[221px] tracking-[-0.12px]"],
  ["Monthwise Top Consumption", "w-[200px]"],
];

function SheetTabs() {
  return (
    <div className="flex h-[34px] border-y border-[#cacaca] bg-[#e5e5e5] text-[13px] leading-[33px] text-[#666]">
      <div className="flex w-[145px] shrink-0 items-center border-r border-[#c6c6c6] pl-[11px]">
        <svg viewBox="0 0 10 13" className="h-[13px] w-[10px]" fill="none" stroke="#666" strokeWidth="1.300">
          <path d="M1 3v7c0 2.500 8 2.500 8 0V3" />
          <ellipse cx="5" cy="3" rx="4" ry="2" />
        </svg>
        <span className="ml-[5px] tracking-[0.15px]">Data Source</span>
      </div>
      <div className="w-[52px] shrink-0 border-r border-[#c6c6c6] pr-[14px] text-right tracking-[-0.15px]">nption</div>
      {sheets.map(([s, w]) => (
        <div key={s} className={`shrink-0 whitespace-nowrap border-r border-[#c6c6c6] pl-[6px] ${w}`}>
          {s}
        </div>
      ))}
      <div className="w-[212px] shrink-0 whitespace-nowrap border-r border-[#c6c6c6] bg-[#fafafa] pl-[6px] font-semibold leading-[31px] text-[#444]">
        Regionwise State Consumption
      </div>
      {[
        "M13 14H3V2.500h12V10M6 11V8M9 11V5.500M12 10V7",
        "M12 14H3V2.500h11.500V9M8.500 2.500V14M3 8h11",
        "M8 14.500L3 13V2.500l5 2v10l3-1M8 4.500l6.500-2V9",
      ].map((d) => (
        <div key={d} className="flex w-[35px] shrink-0 items-center justify-center border-r border-[#c6c6c6]">
          <svg viewBox="0 0 20 20" className="h-[20px] w-[20px]" fill="none" stroke="#666" strokeWidth="1.300">
            <path d={d} />
            <path d="M15.500 10.500v8M11.500 14.500h8" strokeWidth="2.200" />
          </svg>
        </div>
      ))}
    </div>
  );
}

function StatusBar() {
  return (
    <div className="flex h-[24px] items-center border-b border-[#a9b8ac] bg-[#eaeaea] text-[12px] text-[#222] shadow-[inset_0_-1px_0_#fff]">
      <span className="w-[72px] pl-[3px]">66 marks</span>
      <span className="w-[140px] pl-[3px]">33 rows by 2 columns</span>
      <span className="pl-[3px] tracking-[0.3px]">SUM(Usage): 1,709,728</span>
      <div className="ml-auto flex h-[22px] self-start">
        <div className="w-[140px] border-l border-[#c6c6c6]" />
        <div className="w-[30px] border-l border-[#c6c6c6]" />
        <div className="w-[30px] border-l border-[#c6c6c6]" />
        <div className="w-[52px] border-l border-[#c6c6c6]" />
        <div className="w-[78px] border-l border-[#c6c6c6] pl-[8px] pt-[6px]">
          <svg viewBox="0 0 60 10" className="h-[10px] w-[60px]" fill="#555">
            <path d="M0 1h1.500v8H0zM6.500 1v8l-4-4zM23.500 1v8l-4-4zM37 1v8l4-4zM53 1v8l4-4zM57.500 1H59v8h-1.500z" />
          </svg>
        </div>
        <div className="w-[75px] border-l border-[#c6c6c6] pl-[9px] pt-[5px]">
          <svg viewBox="0 0 60 13" className="h-[13px] w-[60px]">
            {[0, 5, 10].map((y) => [0, 5, 10].map((x) => <rect key={`${x}-${y}`} x={x} y={y} width="3.500" height="3" fill="#b8b8b8" />))}
            <rect x="23" y="0" width="13" height="8" fill="#b8b8b8" />
            {[23, 28, 33].map((x) => (
              <rect key={x} x={x} y="10" width="3" height="3" fill="#b8b8b8" />
            ))}
            <rect x="46" y="0" width="13" height="13" fill="#5f5f5f" />
          </svg>
        </div>
      </div>
    </div>
  );
}

function AppIcon({ children, running = false }: { children: React.ReactNode; running?: boolean }) {
  return (
    <div className="relative flex h-[52px] w-[48.1px] shrink-0 items-center justify-center">
      <svg viewBox="0 0 32 32" className="h-[32px] w-[32px]">
        {children}
      </svg>
      {running && <div className="absolute bottom-[6px] h-[3px] w-[7px] rounded-full bg-[#7a8a7c]" />}
    </div>
  );
}

function Taskbar() {
  return (
    <div className="flex h-[52px] items-center bg-[linear-gradient(90deg,#c9e8cf_0%,#c9e8cf_15%,#c3ebe0_22%,#c5ecd6_30%,#caebd0_45%,#cdecca_70%,#cdeacd_100%)] text-[12px] text-[#222]">
      <svg viewBox="0 0 28 30" className="ml-[20px] h-[30px] w-[28px]">
        <defs>
          <linearGradient id="moon" x1="0" y1="0" x2="0" y2="1">
            <stop offset="0" stopColor="#fbc02d" />
            <stop offset="1" stopColor="#f07f1a" />
          </linearGradient>
          <linearGradient id="cloud" x1="0" y1="0" x2="0" y2="1">
            <stop offset="0" stopColor="#dbe8fb" />
            <stop offset="1" stopColor="#93b2ec" />
          </linearGradient>
        </defs>
        <path d="M17 2c8 7 8 18-1 24-5 2-11 0-13-4 9 1 16-7 14-20z" fill="url(#moon)" />
        <path d="M4 12a3.500 3.500 0 0 1 0-6.500 5 5 0 0 1 9 0 3.500 3.500 0 0 1 1 6.500z" fill="url(#cloud)" />
        <path d="M14 27a3.500 3.500 0 0 1 0-6.500 5 5 0 0 1 9-1 3.500 3.500 0 0 1 1 7.500z" fill="url(#cloud)" />
      </svg>
      <div className="ml-[7px] w-[460px] leading-[18px]">
        <div>28°C</div>
        <div className="tracking-[0.3px] text-[#5c6b5f]">Partly cloudy</div>
      </div>
      <svg viewBox="0 0 25 25" className="ml-[20px] h-[25px] w-[25px] shrink-0">
        <defs>
          <linearGradient id="win" x1="0" y1="0" x2="1" y2="1">
            <stop offset="0" stopColor="#4cc8fa" />
            <stop offset="1" stopColor="#0a70d0" />
          </linearGradient>
        </defs>
        <path d="M0 1Q0 0 1 0h11v12H0zM13 0h11q1 0 1 1v11H13zM0 13h12v12H1q-1 0-1-1zM13 13h12v11q0 1-1 1H13z" fill="url(#win)" />
      </svg>
      <div className="ml-[16px] flex h-[33px] w-[241px] shrink-0 items-center rounded-full bg-[#eff8f2] pl-[12px] shadow-[0_0_1px_#8fa895]">
        <svg viewBox="0 0 18 18" className="h-[17px] w-[17px]" fill="none" stroke="#222" strokeWidth="2">
          <circle cx="7.500" cy="7.500" r="6" />
          <path d="M12 12l5 5" />
        </svg>
        <span className="ml-[11px] pb-px text-[14px] tracking-[0.1px] text-[#6a736d]">Search</span>
        <svg viewBox="0 0 60 30" className="ml-auto mr-[4px] mt-[1px] h-[30px] w-[60px]">
          <path d="M0 29c0-8 8-9 16-9l43-.5C58 27 52 29 47 29z" fill="#b8762f" />
          <path d="M12 24l42-3-8 5-34 1z" fill="#8a5320" />
          <path d="M5 16c3-6 7-4 10 0l-2 2zM31 17c-3-7-8-5-10-1z" fill="#58a83a" />
          <path d="M13 14h13l1 9q-7 5-13 0z" fill="#2f2a2b" />
          <circle cx="13.500" cy="7" r="4.500" fill="#f27fae" />
          <circle cx="24" cy="6.500" r="4.500" fill="#ee6fa2" />
          <circle cx="18.500" cy="4.500" r="4.300" fill="#f9a0c4" />
          <circle cx="18" cy="10" r="4.500" fill="#f48bb5" />
          <circle cx="19" cy="7.500" r="1.500" fill="#f9d25a" />
          <path d="M32 19l6-9 7 3-4 6z" fill="#8e9fae" />
          <path d="M42 10l7-8q4-3 4 1l-8 8z" fill="#2d8fe0" />
        </svg>
      </div>
      <div className="ml-[2px] flex">
        <AppIcon>
          <path d="M3 10h20v16H3z" fill="#2f2f2f" />
          <path d="M10 3h19v17H10z" fill="#f4f4f4" opacity=".9" />
          <path d="M10 10h13v10H10z" fill="#bcbcbc" />
        </AppIcon>
        <AppIcon>
          <path d="M16 3a12 12 0 0 1 0 24H4l1.500-5A12 12 0 0 1 16 3z" fill="#6264c7" />
          <path d="M5 12A12 12 0 0 1 16 3c-4 3-8 9-8 15z" fill="#8b6fc0" />
          <rect x="9" y="11" width="10" height="9" rx="1.500" fill="#fff" />
          <path d="M20 14l4-2.500v8L20 17z" fill="#fff" />
        </AppIcon>
        <AppIcon>
          <path d="M10 8V4h12v4" fill="none" stroke="#27b1e6" strokeWidth="1.800" />
          <path d="M3 7h26v17q0 4-4 4H7q-4 0-4-4z" fill="#173f77" />
          <rect x="11" y="12" width="4.500" height="4.500" fill="#f25022" />
          <rect x="16.500" y="12" width="4.500" height="4.500" fill="#7fba00" />
          <rect x="11" y="17.500" width="4.500" height="4.500" fill="#00a4ef" />
          <rect x="16.500" y="17.500" width="4.500" height="4.500" fill="#ffb900" />
        </AppIcon>
        <AppIcon running>
          <path d="M3 4h9l2 3h14v5H3z" fill="#e29f12" />
          <rect x="3" y="7" width="26" height="20" rx="1.500" fill="#fccb3f" />
          <path d="M7 27v-5q0-3 3-3h12q3 0 3 3v5z" fill="#1673c8" />
        </AppIcon>
        <AppIcon>
          <path d="M15.500 3.500L5.500 9v12l6-3.500V11l9-4.500z" fill="#5f78d8" />
          <path d="M15.500 3.500l11.500 6v12.500l-6-3.500v-6.500l-9-4.500z" fill="#3c4a92" />
          <path d="M27 17v4.500l-11 6-10.500-6 5.500-4 5 3z" fill="#a87bdc" />
          <path d="M5.500 12v9.500l10.500 6 4-3-8.500-5v-7z" fill="#8c6dd0" opacity=".85" />
          <circle cx="16.500" cy="15.500" r="4" fill="#dbeee0" />
        </AppIcon>
        <AppIcon>
          <circle cx="15" cy="16" r="12.500" fill="#fff" />
          <circle cx="15" cy="16" r="11" fill="#0d97d8" />
          <path d="M11 12.500c0-5 8.500-5 8.500-.5 0 3-4 3.500-4 7" fill="none" stroke="#fff" strokeWidth="3" />
          <circle cx="15.200" cy="22.500" r="1.900" fill="#fff" />
          <circle cx="24" cy="7.500" r="8" fill="#ffc20e" />
        </AppIcon>
        <AppIcon>
          <circle cx="17.500" cy="8" r="4" fill="#7b83eb" />
          <circle cx="24.500" cy="9" r="2.500" fill="#5059c9" />
          <path d="M10.500 13h17v7q-1 4-5 4-3 3-7 1-4-1-5-5z" fill="#5b63d0" />
          <rect x="4" y="9.500" width="13" height="13" rx="1" fill="#fff" />
          <path d="M7 12.500h7M10.500 12.500v8" stroke="#4b53bc" strokeWidth="2" />
        </AppIcon>
        <AppIcon>
          <circle cx="16" cy="15" r="12.500" fill="#1d87cf" />
          <path d="M4 13C6 0 27-1 28.500 14c0 6-8 6-10 4 3-4 0-7-4-7-5 0-9 1-10.500 2z" fill="#43c7a0" />
          <path d="M14 16c-1 6 5 9 12 7-4 6-12 6-16 2z" fill="#0f4f97" />
          <circle cx="9" cy="22" r="6" fill="#f3f3f3" />
          <circle cx="9" cy="20" r="2" fill="#888" />
          <path d="M5.500 25.500q3.500-5 7 0z" fill="#888" />
        </AppIcon>
        <div className="relative flex h-[52px] w-[48.1px] items-center justify-center">
          <div className="flex h-[42px] w-[38px] items-center justify-center rounded bg-[#e6f4e7] shadow-[4px_0_0_-1px_#dff0e0]">
            <div className="flex h-[25px] w-[25px] items-center justify-center bg-[#f5f8f9] shadow">
              <TableauMark mono className="h-[21px] w-[21px] opacity-80" />
            </div>
          </div>
          <div className="absolute bottom-[6px] left-[15px] h-[3px] w-[18px] rounded-full bg-[#0f7bd6]" />
        </div>
        <AppIcon running>
          <circle cx="16" cy="16" r="13" fill="#f7c934" />
          <path d="M16 16L4.700 9.500a13 13 0 0 1 22.600 0z" fill="#dd4437" />
          <path d="M4.700 9.500A13 13 0 0 0 14.500 28.900L20.500 18z" fill="#2f9e55" />
          <circle cx="16" cy="16" r="6" fill="#fff" />
          <circle cx="16" cy="16" r="4.800" fill="#4385f0" />
          <circle cx="24" cy="8" r="8" fill="#bf3410" />
          <text x="21.200" y="11.700" fontSize="10" fill="#fff">E</text>
        </AppIcon>
        <AppIcon running>
          <path d="M16 3a12.500 12.500 0 1 1-6 23.500L3 28.500l2-7A12.500 12.500 0 0 1 16 3z" fill="#fff" />
          <circle cx="16" cy="15.500" r="10.600" fill="#3fc95a" />
          <path d="M5.500 26l1.700-6 4.500 4.500z" fill="#3fc95a" />
          <path d="M11.500 10.500c1-1.500 2-1 2.500.2l.8 2-1.300 1.600c1 2 2.500 3.200 4.500 4l1.600-1.600 3 1.500c.2 2.500-2.600 3.600-5 2.800-3.600-1.200-7.500-5-6.900-8.500z" fill="#fff" />
        </AppIcon>
        <AppIcon running>
          <rect x="9.500" y="4" width="19" height="23" rx="1" fill="#21a366" />
          <path d="M18.500 4h10v6h-10z" fill="#33c481" />
          <path d="M9.500 16h19v10q0 1-1 1h-17q-1 0-1-1z" fill="#185c37" />
          <path d="M18.500 10h10v6h-10z" fill="#21a366" />
          <rect x="2.500" y="9" width="13" height="13" rx="1" fill="#107c41" />
          <path d="M6.300 12l5.400 7.500M11.700 12l-5.400 7.500" stroke="#fff" strokeWidth="2" />
        </AppIcon>
      </div>
      <svg viewBox="0 0 130 24" className="ml-[125px] h-[24px] w-[130px] shrink-0" fill="none" stroke="#222" strokeWidth="1.400">
        <path d="M7 15l6-6 6 6" />
        <path d="M40 10c2-7 12-8 16-3M57 3v5h-5M40 14v6M40 20h6M40.500 15c1 3 4 5 7 5M54 13c0-1-.5-2-1-2" />
        <circle cx="53.500" cy="17" r="4.500" fill="#f89a1c" stroke="none" />
        <path d="M77 17a4.500 4.500 0 0 1 1-8.500 7 7 0 0 1 12 .5 4 4 0 0 1 3 5v3z" fill="#8c8c8c" />
        <circle cx="89" cy="16" r="5" fill="#1f78d1" stroke="#fff" strokeWidth=".8" />
        <path d="M86.500 15.500c1-2.500 4-2.500 5 0M91.500 17c-1 2-4 2-5 0" stroke="#fff" strokeWidth="1.100" />
        <rect x="115.500" y="3.500" width="5.500" height="11" rx="2.700" stroke="#2763b5" fill="#a7c8e8" />
        <path d="M112.500 11c0 8 11.500 8 11.500 0M118.200 17v3.500" stroke="#2763b5" />
      </svg>
      <div className="ml-[10px] w-[40px] text-center leading-[18px]">
        <div>ENG</div>
        <div>IN</div>
      </div>
      <svg viewBox="0 0 76 20" className="ml-[11px] h-[20px] w-[76px] shrink-0" fill="none" stroke="#222" strokeWidth="1.300">
        <path d="M2 8.500c5-5.500 13-5.500 18 0M4.500 11c4-4 9-4 13 0M7.200 13.500c2.500-2.500 5-2.500 7.600 0" />
        <circle cx="11" cy="15.500" r="1.400" fill="#222" stroke="none" />
        <path d="M29 8h3.500l4-4v12l-4-4H29zM39.500 7.500c1.500 1.500 1.500 3.500 0 5M42 5.500c2.500 2.500 2.500 6.500 0 9M44.500 3.500c4 4 4 9 0 13" />
        <rect x="56.500" y="5" width="15" height="10" rx="2" />
        <rect x="58" y="6.500" width="5" height="7" fill="#222" stroke="none" />
        <path d="M73 8v4" strokeWidth="2" />
      </svg>
      <div className="ml-auto text-right text-[12.5px] leading-[18px] tracking-[0.35px]">
        <div>20:22</div>
        <div>14-04-2023</div>
      </div>
      <div className="ml-[8px] mr-[21px] flex h-[18px] w-[18px] items-center justify-center rounded-full bg-[#0b68c1] text-[11px] text-white">3</div>
    </div>
  );
}

export default function App() {
  return (
    <div className="relative flex h-[1080px] w-[1920px] flex-col overflow-hidden bg-[#f5f5f5] font-['Noto_Sans',sans-serif]">
      <TitleBar />
      <div className="flex h-[23px] items-center bg-white pl-[9px] pt-[2px] text-[12px] text-black">
        {menu.map(([m, w]) => (
          <span key={m} className={`shrink-0 ${w}`}>
            {m}
          </span>
        ))}
      </div>
      <Toolbar />
      <div className="flex h-[876px]">
        <div className="flex w-full border-t border-[#cfcfcf]">
          <DataPane />
          <Cards />
          <div className="relative w-[1321px] shrink-0">
            <Shelf
              className="-mt-px h-[30px]"
              label="Columns"
              icon={
                <svg viewBox="0 0 13 14" className="h-[13px] w-[13px]" stroke="#555" strokeWidth="2.200">
                  <path d="M2 4v10M6.500 4v10M11 4v10M2 0v2.500M6.500 0v2.500M11 0v2.500" />
                </svg>
              }
            >
              <Pill color="bg-[#4996b2]">
                <svg viewBox="0 0 11 11" className="mr-[7px] h-[11px] w-[11px]" fill="none" stroke="#fff" strokeWidth="1.100">
                  <path d="M.6.6h9.800v9.800H.6zM5.500 2.500v6M2.500 5.500h6" />
                </svg>
                <span className="tracking-[0.45px]">YEAR(Dates)</span>
              </Pill>
              <Pill color="bg-[#00b180]">
                <span className="tracking-[0.3px]">SUM(Usage)</span>
              </Pill>
            </Shelf>
            <Shelf
              className="mt-[7px] h-[31px]"
              label="Rows"
              icon={
                <svg viewBox="0 0 14 13" className="h-[12px] w-[13px]" stroke="#555" strokeWidth="2">
                  <path d="M4 1.500h10M4 6.500h10M4 11.500h10M0 1.500h2.500M0 6.500h2.500M0 11.500h2.500" />
                </svg>
              }
            >
              <Pill color="bg-[#4996b2]">
                <span className="tracking-[0.15px]">Regions</span>
              </Pill>
              <Pill color="bg-[#4996b2]">
                <span className="tracking-[0.3px]">States</span>
              </Pill>
            </Shelf>
            <Worksheet />
            <div className="absolute left-0 top-[-95px]">
              <div className="absolute left-[232px] top-[228px] h-[723px] w-px bg-[#c4c4c4]" />
              <div className="absolute left-[762px] top-[250px] h-[701px] w-px bg-[#c4c4c4]" />
              <div className="absolute left-[1292px] top-[228px] h-[723px] w-px bg-[#c4c4c4]" />
            </div>
          </div>
          <div className="ml-[7px] mt-[590px] h-[248px] w-[170px] border-2 border-[#d0d0d0] bg-white pl-[3px] pt-[23px] text-[13px] text-[#444]">
            {legend.map(([n, c]) => (
              <div key={n} className="flex h-[22.1px] items-center">
                <span className={`h-[16px] w-[16px] ${c}`} />
                <span className="ml-[5px] pt-[2px] tracking-[0.3px]">{n}</span>
              </div>
            ))}
          </div>
        </div>
      </div>
      <SheetTabs />
      <StatusBar />
      <Taskbar />
      <ShowMe />
    </div>
  );
}
